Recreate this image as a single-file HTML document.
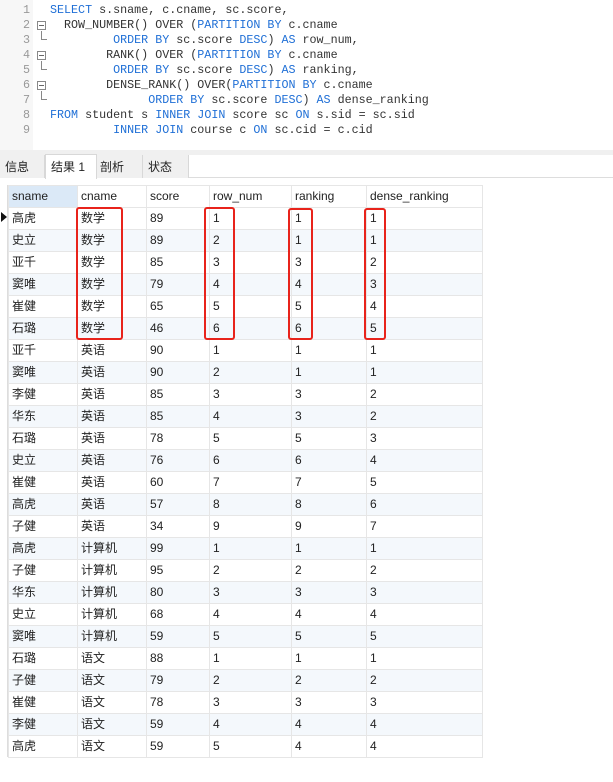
<!DOCTYPE html>
<html><head><meta charset="utf-8"><style>
*{margin:0;padding:0;box-sizing:border-box}
body{width:613px;height:782px;background:#fff;position:relative;overflow:hidden;font-family:"Liberation Sans","Noto Sans CJK SC",sans-serif}
#ed{position:absolute;left:0;top:0;width:613px;height:150px;background:#fff}
#gut{position:absolute;left:0;top:0;width:33px;height:150px;background:#f7f7f7}
.ln{position:absolute;left:0;width:30px;text-align:right;font:11.7px "Liberation Mono",monospace;color:#999;line-height:15px}
.cl{position:absolute;left:50px;font:11.7px "Liberation Mono",monospace;color:#333;line-height:15px;white-space:pre}
.k{color:#1f6fd6}
.fb{position:absolute;left:37px;width:9px;height:9px;border:1px solid #888;background:#fff}
.fb:after{content:"";position:absolute;left:1px;top:3px;width:5px;height:1px;background:#666}
.fl{position:absolute;left:41px;width:6px;border-left:1px solid #888;border-bottom:1px solid #888}
#sep{position:absolute;left:0;top:150px;width:613px;height:5px;background:#f0f0f0}
#tabs{position:absolute;left:0;top:155px;width:613px;height:23px;background:#fff;border-bottom:1px solid #ddd}
.tb{position:absolute;top:0;height:23px;background:#f0f0f0;border-right:1px solid #d8d8d8;font-size:12px;line-height:25px;padding-left:5px;color:#222}
.tb.a{background:#fff;top:-1px;height:25px;border:1px solid #d8d8d8;border-bottom:none;line-height:24px}
table{position:absolute;left:8px;top:185px;border-collapse:collapse;font-size:12px;color:#222}
td{height:21px;border:1px solid #e6e6e6;padding:0 0 0 3px;vertical-align:middle;line-height:21px}
tr.h td{background:#fff}
tr.h td:first-child{background:#dbe9f7}
tr:nth-child(odd):not(.h) td{background:#f4f8fc}
#mk{position:absolute;left:0;top:185px;width:8px;height:572px;border-right:1px solid #ddd}
.tri{position:absolute;left:1px;top:212px;width:0;height:0;border-left:6px solid #111;border-top:5px solid transparent;border-bottom:5px solid transparent}
.rb{position:absolute;border:2px solid #e8231b;border-radius:3px}
</style></head><body>
<div id="ed"><div id="gut"></div>
<div class="ln" style="top:3px">1</div><div class="ln" style="top:18px">2</div><div class="ln" style="top:33px">3</div><div class="ln" style="top:48px">4</div><div class="ln" style="top:63px">5</div><div class="ln" style="top:78px">6</div><div class="ln" style="top:93px">7</div><div class="ln" style="top:108px">8</div><div class="ln" style="top:123px">9</div>
<div class="fb" style="top:21px"></div><div class="fl" style="top:31px;height:9px"></div>
<div class="fb" style="top:51px"></div><div class="fl" style="top:61px;height:9px"></div>
<div class="fb" style="top:81px"></div><div class="fl" style="top:91px;height:9px"></div>
<div class="cl" style="top:3px"><span class="k">SELECT</span> s.sname, c.cname, sc.score,</div>
<div class="cl" style="top:18px">  ROW_NUMBER() OVER (<span class="k">PARTITION BY</span> c.cname</div>
<div class="cl" style="top:33px">         <span class="k">ORDER BY</span> sc.score <span class="k">DESC</span>) <span class="k">AS</span> row_num,</div>
<div class="cl" style="top:48px">        RANK() OVER (<span class="k">PARTITION BY</span> c.cname</div>
<div class="cl" style="top:63px">         <span class="k">ORDER BY</span> sc.score <span class="k">DESC</span>) <span class="k">AS</span> ranking,</div>
<div class="cl" style="top:78px">        DENSE_RANK() OVER(<span class="k">PARTITION BY</span> c.cname</div>
<div class="cl" style="top:93px">              <span class="k">ORDER BY</span> sc.score <span class="k">DESC</span>) <span class="k">AS</span> dense_ranking</div>
<div class="cl" style="top:108px"><span class="k">FROM</span> student s <span class="k">INNER JOIN</span> score sc <span class="k">ON</span> s.sid = sc.sid</div>
<div class="cl" style="top:123px">         <span class="k">INNER JOIN</span> course c <span class="k">ON</span> sc.cid = c.cid</div>
</div>
<div id="sep"></div>
<div id="tabs">
<div class="tb" style="left:0;width:45px">信息</div>
<div class="tb a" style="left:45px;width:52px">结果 1</div>
<div class="tb" style="left:97px;width:46px;padding-left:3px">剖析</div>
<div class="tb" style="left:143px;width:46px">状态</div>
</div>
<div id="mk"></div><div class="tri"></div>
<table>
<colgroup><col style="width:69px"><col style="width:69px"><col style="width:63px"><col style="width:82px"><col style="width:75px"><col style="width:116px"></colgroup>
<tr class="h"><td>sname</td><td>cname</td><td>score</td><td>row_num</td><td>ranking</td><td>dense_ranking</td></tr>
<tr><td>高虎</td><td>数学</td><td>89</td><td>1</td><td>1</td><td>1</td></tr>
<tr><td>史立</td><td>数学</td><td>89</td><td>2</td><td>1</td><td>1</td></tr>
<tr><td>亚千</td><td>数学</td><td>85</td><td>3</td><td>3</td><td>2</td></tr>
<tr><td>窦唯</td><td>数学</td><td>79</td><td>4</td><td>4</td><td>3</td></tr>
<tr><td>崔健</td><td>数学</td><td>65</td><td>5</td><td>5</td><td>4</td></tr>
<tr><td>石璐</td><td>数学</td><td>46</td><td>6</td><td>6</td><td>5</td></tr>
<tr><td>亚千</td><td>英语</td><td>90</td><td>1</td><td>1</td><td>1</td></tr>
<tr><td>窦唯</td><td>英语</td><td>90</td><td>2</td><td>1</td><td>1</td></tr>
<tr><td>李健</td><td>英语</td><td>85</td><td>3</td><td>3</td><td>2</td></tr>
<tr><td>华东</td><td>英语</td><td>85</td><td>4</td><td>3</td><td>2</td></tr>
<tr><td>石璐</td><td>英语</td><td>78</td><td>5</td><td>5</td><td>3</td></tr>
<tr><td>史立</td><td>英语</td><td>76</td><td>6</td><td>6</td><td>4</td></tr>
<tr><td>崔健</td><td>英语</td><td>60</td><td>7</td><td>7</td><td>5</td></tr>
<tr><td>高虎</td><td>英语</td><td>57</td><td>8</td><td>8</td><td>6</td></tr>
<tr><td>子健</td><td>英语</td><td>34</td><td>9</td><td>9</td><td>7</td></tr>
<tr><td>高虎</td><td>计算机</td><td>99</td><td>1</td><td>1</td><td>1</td></tr>
<tr><td>子健</td><td>计算机</td><td>95</td><td>2</td><td>2</td><td>2</td></tr>
<tr><td>华东</td><td>计算机</td><td>80</td><td>3</td><td>3</td><td>3</td></tr>
<tr><td>史立</td><td>计算机</td><td>68</td><td>4</td><td>4</td><td>4</td></tr>
<tr><td>窦唯</td><td>计算机</td><td>59</td><td>5</td><td>5</td><td>5</td></tr>
<tr><td>石璐</td><td>语文</td><td>88</td><td>1</td><td>1</td><td>1</td></tr>
<tr><td>子健</td><td>语文</td><td>79</td><td>2</td><td>2</td><td>2</td></tr>
<tr><td>崔健</td><td>语文</td><td>78</td><td>3</td><td>3</td><td>3</td></tr>
<tr><td>李健</td><td>语文</td><td>59</td><td>4</td><td>4</td><td>4</td></tr>
<tr><td>高虎</td><td>语文</td><td>59</td><td>5</td><td>4</td><td>4</td></tr>
</table>
<div class="rb" style="left:76px;top:207px;width:47px;height:133px"></div>
<div class="rb" style="left:204px;top:207px;width:31px;height:133px"></div>
<div class="rb" style="left:288px;top:208px;width:25px;height:132px"></div>
<div class="rb" style="left:364px;top:208px;width:22px;height:132px"></div>
</body></html>
